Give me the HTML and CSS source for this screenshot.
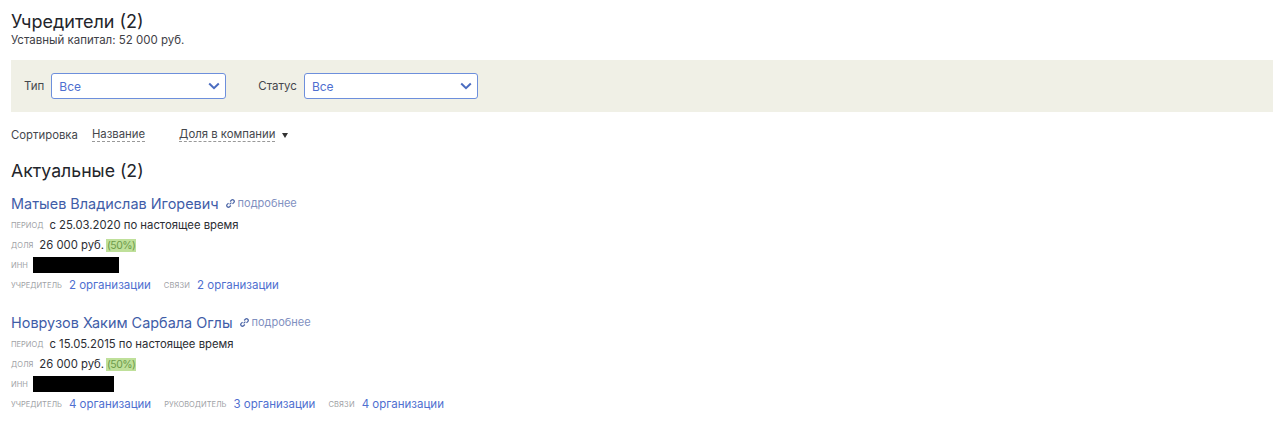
FILE: index.html
```html
<!DOCTYPE html>
<html lang="ru">
<head>
<meta charset="utf-8">
<title>Учредители</title>
<link rel="stylesheet" href="styles.css">
</head>
<body>
<main class="page">
  <header class="head">
    <h1 class="title">Учредители (2)</h1>
    <p class="capital">Уставный капитал: 52 000 руб.</p>
  </header>
  <form class="filters">
    <label class="filter"><span class="filter-label">Тип</span>
      <span class="select"><span>Все</span>
        <svg class="chev" viewBox="0 0 12 8" width="12" height="8"><path d="M1.2 1.5 6 6.2l4.8-4.7" fill="none" stroke="#4a6cc0" stroke-width="2"/></svg>
      </span>
    </label>
    <label class="filter"><span class="filter-label">Статус</span>
      <span class="select"><span>Все</span>
        <svg class="chev" viewBox="0 0 12 8" width="12" height="8"><path d="M1.2 1.5 6 6.2l4.8-4.7" fill="none" stroke="#4a6cc0" stroke-width="2"/></svg>
      </span>
    </label>
  </form>
  <div class="sort">
    <span>Сортировка</span>
    <span class="sort-link">Название</span>
    <span class="sort-active"><span class="sort-link">Доля в компании</span><i class="tri"></i></span>
  </div>
  <h2 class="section">Актуальные (2)</h2>
  <article class="person">
    <div class="name-row"><a class="name">Матыев Владислав Игоревич</a>
      <svg class="link-ico" viewBox="0 0 10 10" width="9" height="9"><path d="M4 6 6 4M4.6 2.8 6 1.4a1.8 1.8 0 0 1 2.6 2.6L7.2 5.4M5.4 7.2 4 8.6A1.8 1.8 0 0 1 1.4 6l1.4-1.4" fill="none" stroke="#4f68a8" stroke-width="1.4"/></svg>
      <a class="more">подробнее</a></div>
    <div class="row"><span class="cap">период</span><span class="val">с 25.03.2020 по настоящее время</span></div>
    <div class="row"><span class="cap">доля</span><span class="val">26 000 руб.</span><span class="pct">(50%)</span></div>
    <div class="row"><span class="cap">инн</span><span class="redact r1"></span></div>
    <div class="row links"><span class="cap">учредитель</span><a class="org">2 организации</a><span class="cap next wide">связи</span><a class="org">2 организации</a></div>
  </article>
  <article class="person">
    <div class="name-row"><a class="name">Новрузов Хаким Сарбала Оглы</a>
      <svg class="link-ico" viewBox="0 0 10 10" width="9" height="9"><path d="M4 6 6 4M4.6 2.8 6 1.4a1.8 1.8 0 0 1 2.6 2.6L7.2 5.4M5.4 7.2 4 8.6A1.8 1.8 0 0 1 1.4 6l1.4-1.4" fill="none" stroke="#4f68a8" stroke-width="1.4"/></svg>
      <a class="more">подробнее</a></div>
    <div class="row"><span class="cap">период</span><span class="val">с 15.05.2015 по настоящее время</span></div>
    <div class="row"><span class="cap">доля</span><span class="val">26 000 руб.</span><span class="pct">(50%)</span></div>
    <div class="row"><span class="cap">инн</span><span class="redact r2"></span></div>
    <div class="row links"><span class="cap">учредитель</span><a class="org">4 организации</a><span class="cap next">руководитель</span><a class="org">3 организации</a><span class="cap next wide">связи</span><a class="org">4 организации</a></div>
  </article>
</main>
</body>
</html>
```
FILE: styles.css
```css
* { box-sizing: border-box; }
html, body { margin: 0; background: #fff; }
body { font-family: Inter, "Liberation Sans", sans-serif; color: #2b2d33; height: 430px; overflow: hidden; }
.page { padding: 11px 7px 0 11px; }
.title { margin: 0; font-size: 18px; line-height: 22px; font-weight: 400; color: #23252b; }
.capital { margin: 0; font-size: 11.5px; line-height: 15px; color: #3f4147; }
.filters { display: flex; gap: 32px; align-items: center; height: 52px; margin-top: 12px; padding-left: 13px; background: #f0f0e6; }
.filter { display: flex; align-items: center; gap: 7px; font-size: 11.5px; color: #45474d; }
.select { display: flex; align-items: center; justify-content: space-between; width: 175px; height: 26px; padding: 0 5px 0 7px; background: #fff; border: 1px solid #6d8fdc; border-radius: 3px; color: #4f6fd0; font-size: 12px; }
.filter + .filter .select { width: 174px; }
.sort { display: flex; align-items: center; height: 16px; margin-top: 15px; font-size: 11.35px; color: #45474d; }
.sort-link { margin-left: 14px; border-bottom: 1px dashed #999; line-height: 13px; }
.sort-active { display: flex; align-items: center; margin-left: 20px; }
.tri { width: 0; height: 0; margin-left: 7px; border-left: 3px solid transparent; border-right: 3px solid transparent; border-top: 5px solid #333; }
.section { margin: 16px 0 0; font-size: 17.7px; line-height: 24px; font-weight: 400; color: #23252b; }
.person { margin-top: 11px; }
.person + .person { margin-top: 18px; }
.name-row { display: flex; align-items: center; height: 18px; margin-bottom: 3px; }
.name { font-size: 14.45px; color: #3f5da8; }
.link-ico { margin-left: 7px; }
.more { margin-left: 3px; font-size: 11px; color: #7f90bf; }
.row { display: flex; align-items: center; height: 20px; font-size: 11.3px; }
.cap { font-size: 7.5px; text-transform: uppercase; color: #a0a2a6; margin-right: 6px; }
.links .cap { margin-right: 7px; }
.wide { letter-spacing: .15px; }
.val { color: #2b2d33; }
.pct { margin-left: 2px; padding: 0 1px; font-size: 10.5px; line-height: 13px; letter-spacing: -.5px; background: #bfe09a; color: #6d9a4a; }
.redact { display: block; height: 16px; background: #000; }
.r1 { width: 86px; margin-left: -1px; }
.r2 { width: 81px; margin-left: -1px; }
.org { color: #4f6fd0; font-size: 11.5px; }
.next { margin-left: 13px; }
```
